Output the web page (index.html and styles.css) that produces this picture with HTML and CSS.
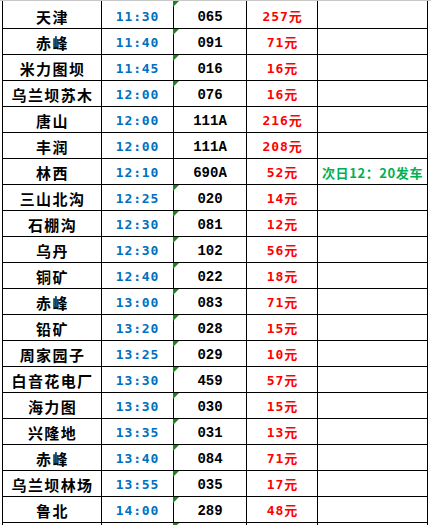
FILE: index.html
```html
<!DOCTYPE html>
<html lang="zh-CN">
<head>
<meta charset="utf-8">
<title>班次表</title>
<link rel="stylesheet" href="styles.css">
</head>
<body>
<div class="topline"></div>
<div class="sheet">
  <div class="row first"><div class="cell c1">天津</div><div class="cell c2">11:30</div><div class="cell c3 tri">065</div><div class="cell c4">257元</div><div class="cell c5"></div></div>
  <div class="row"><div class="cell c1">赤峰</div><div class="cell c2">11:40</div><div class="cell c3 tri">091</div><div class="cell c4">71元</div><div class="cell c5"></div></div>
  <div class="row"><div class="cell c1">米力图坝</div><div class="cell c2">11:45</div><div class="cell c3 tri">016</div><div class="cell c4">16元</div><div class="cell c5"></div></div>
  <div class="row"><div class="cell c1">乌兰坝苏木</div><div class="cell c2">12:00</div><div class="cell c3 tri">076</div><div class="cell c4">16元</div><div class="cell c5"></div></div>
  <div class="row"><div class="cell c1">唐山</div><div class="cell c2">12:00</div><div class="cell c3">111A</div><div class="cell c4">216元</div><div class="cell c5"></div></div>
  <div class="row"><div class="cell c1">丰润</div><div class="cell c2">12:00</div><div class="cell c3">111A</div><div class="cell c4">208元</div><div class="cell c5"></div></div>
  <div class="row"><div class="cell c1">林西</div><div class="cell c2">12:10</div><div class="cell c3">690A</div><div class="cell c4">52元</div><div class="cell c5">次日12：20发车</div></div>
  <div class="row"><div class="cell c1">三山北沟</div><div class="cell c2">12:25</div><div class="cell c3 tri">020</div><div class="cell c4">14元</div><div class="cell c5"></div></div>
  <div class="row"><div class="cell c1">石棚沟</div><div class="cell c2">12:30</div><div class="cell c3 tri">081</div><div class="cell c4">12元</div><div class="cell c5"></div></div>
  <div class="row"><div class="cell c1">乌丹</div><div class="cell c2">12:30</div><div class="cell c3 tri">102</div><div class="cell c4">56元</div><div class="cell c5"></div></div>
  <div class="row"><div class="cell c1">铜矿</div><div class="cell c2">12:40</div><div class="cell c3 tri">022</div><div class="cell c4">18元</div><div class="cell c5"></div></div>
  <div class="row"><div class="cell c1">赤峰</div><div class="cell c2">13:00</div><div class="cell c3 tri">083</div><div class="cell c4">71元</div><div class="cell c5"></div></div>
  <div class="row"><div class="cell c1">铅矿</div><div class="cell c2">13:20</div><div class="cell c3 tri">028</div><div class="cell c4">15元</div><div class="cell c5"></div></div>
  <div class="row"><div class="cell c1">周家园子</div><div class="cell c2">13:25</div><div class="cell c3 tri">029</div><div class="cell c4">10元</div><div class="cell c5"></div></div>
  <div class="row"><div class="cell c1">白音花电厂</div><div class="cell c2">13:30</div><div class="cell c3 tri">459</div><div class="cell c4">57元</div><div class="cell c5"></div></div>
  <div class="row"><div class="cell c1">海力图</div><div class="cell c2">13:30</div><div class="cell c3 tri">030</div><div class="cell c4">15元</div><div class="cell c5"></div></div>
  <div class="row"><div class="cell c1">兴隆地</div><div class="cell c2">13:35</div><div class="cell c3 tri">031</div><div class="cell c4">13元</div><div class="cell c5"></div></div>
  <div class="row"><div class="cell c1">赤峰</div><div class="cell c2">13:40</div><div class="cell c3 tri">084</div><div class="cell c4">71元</div><div class="cell c5"></div></div>
  <div class="row"><div class="cell c1">乌兰坝林场</div><div class="cell c2">13:55</div><div class="cell c3 tri">035</div><div class="cell c4">17元</div><div class="cell c5"></div></div>
  <div class="row"><div class="cell c1">鲁北</div><div class="cell c2">14:00</div><div class="cell c3 tri">289</div><div class="cell c4">48元</div><div class="cell c5"></div></div>
  <div class="row"><div class="cell c1"></div><div class="cell c2"></div><div class="cell c3 tri"></div><div class="cell c4"></div><div class="cell c5"></div></div>
</div>
</body>
</html>
```
FILE: styles.css
```css
html, body {
  margin: 0;
  padding: 0;
  background: #ffffff;
}
body {
  width: 431px;
  height: 525px;
  overflow: hidden;
}
.topline {
  height: 1px;
  background: #c8c8c8;
}
.sheet {
  width: 426px;
  margin-left: 2px;
}
.row {
  display: grid;
  grid-template-columns: 99px 72px 73px 71px 111px;
  height: 26px;
  box-sizing: border-box;
  border-bottom: 1px solid #000;
}
.row.first {
  height: 28px;
}
.cell {
  position: relative;
  box-sizing: border-box;
  border-left: 1px solid #000;
  display: flex;
  align-items: flex-end;
  justify-content: center;
  padding-bottom: 2px;
  line-height: 18px;
  white-space: nowrap;
  font-weight: 700;
}
.c1 {
  font-size: 15px;
  font-family: "Noto Sans CJK SC", sans-serif;
  letter-spacing: 1.4px;
  padding-left: 1px;
  color: #000;
}
.c2 {
  font-size: 13px;
  font-family: "DejaVu Sans Mono", monospace;
  letter-spacing: 0.9px;
  color: #0070c0;
}
.c3 {
  font-size: 14px;
  font-family: "Liberation Mono", monospace;
  color: #000;
}
.c4 {
  font-size: 13px;
  font-family: "DejaVu Sans Mono", "Noto Sans CJK SC", monospace;
  letter-spacing: 0.9px;
  padding-left: 1px;
  color: #ff0000;
}
.c5 {
  border-right: 1px solid #000;
  font-size: 13px;
  font-family: "Noto Sans CJK SC", sans-serif;
  letter-spacing: 0.6px;
  color: #00b050;
}
.tri::before {
  content: "";
  position: absolute;
  top: 0;
  left: -1px;
  width: 6px;
  height: 6px;
  background: #138a13;
  clip-path: polygon(0 0, 100% 0, 0 100%);
}
```
